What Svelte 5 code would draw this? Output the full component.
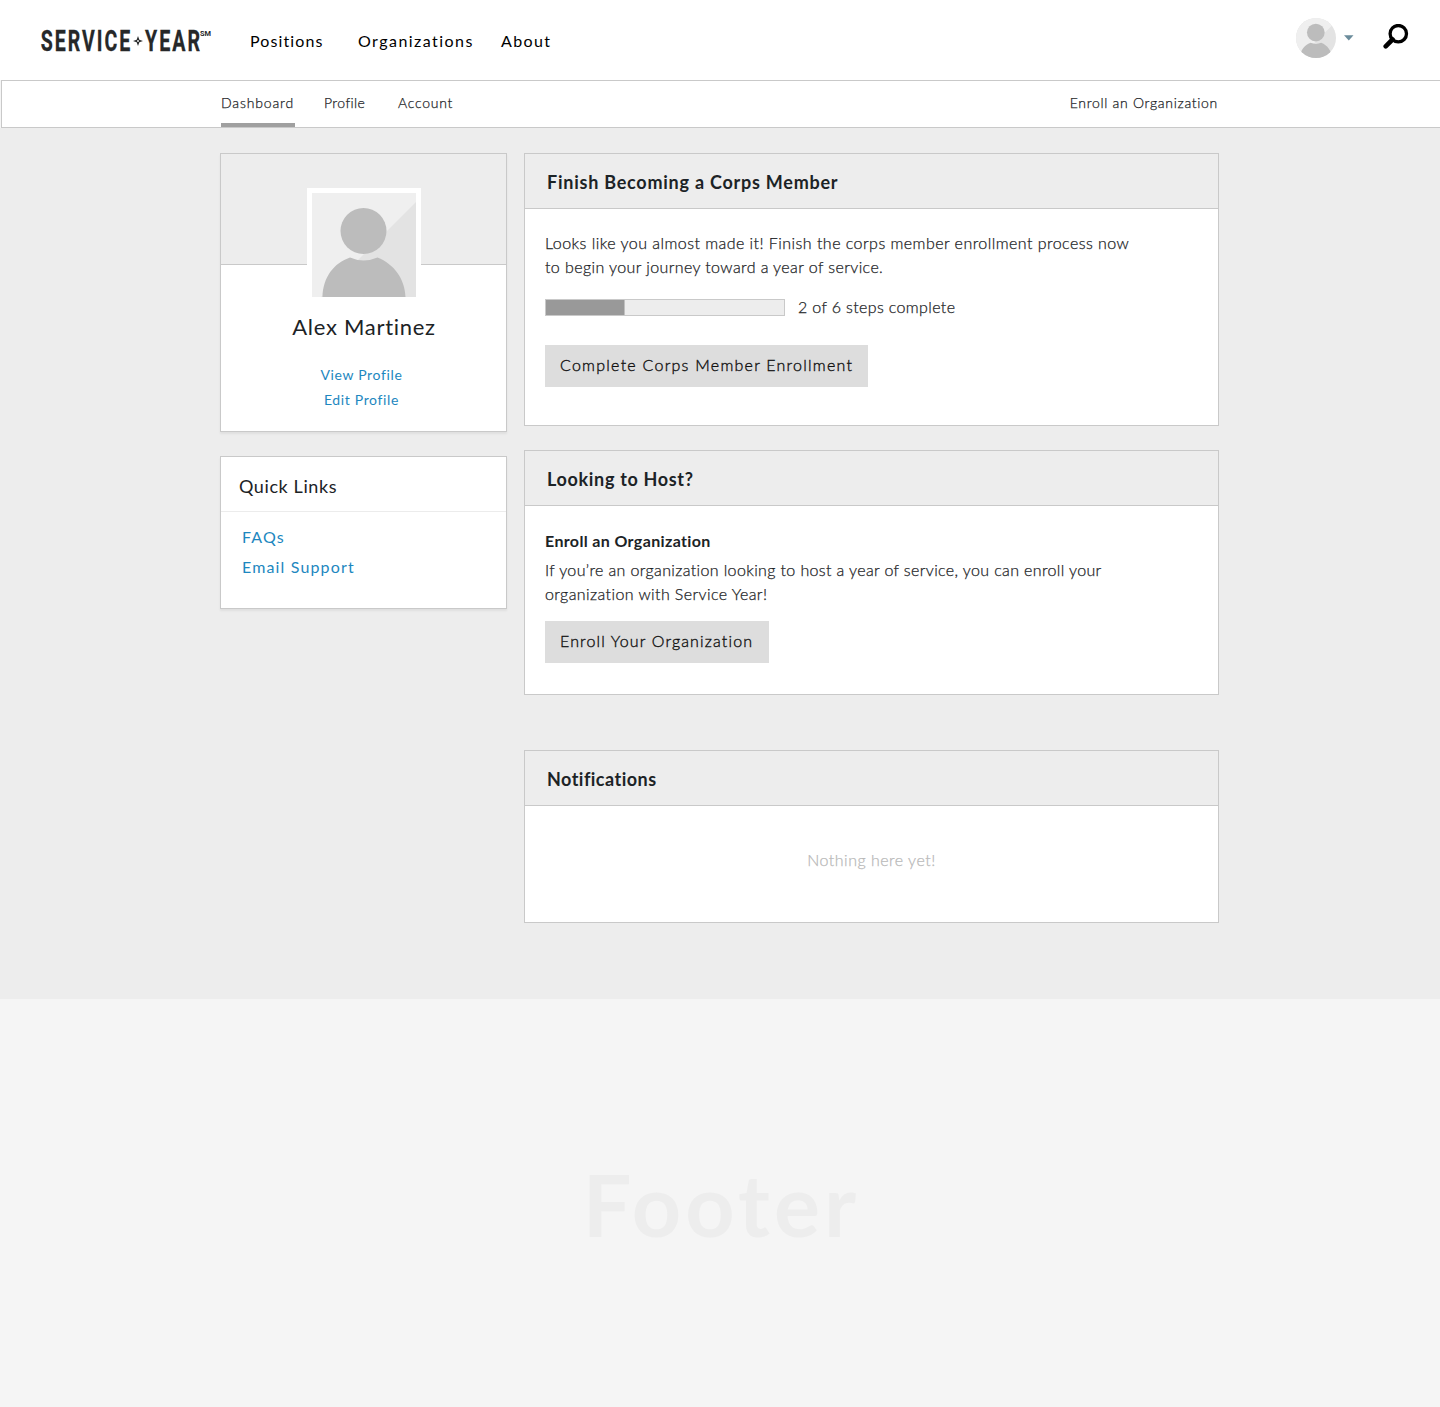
<script>
  const mainNav = [
    { label: 'Positions', key: 'positions' },
    { label: 'Organizations', key: 'organizations' },
    { label: 'About', key: 'about' }
  ];
  const steps = { done: 2, total: 6 };
  const percent = (steps.done / steps.total) * 100;
</script>

{#snippet person()}
  <rect width="104" height="104" fill="#e3e3e3" />
  <path d="M0 0H104V9L9 104H0Z" fill="#efefef" />
  <circle cx="51.5" cy="38" r="23" fill="#bcbcbc" />
  <path d="M10.500 104C11 84 22 70 38 64.500Q51.500 70.500 65.500 64.500C82 71 93 86 93.500 104Z" fill="#bcbcbc" />
{/snippet}

<header class="top">
  <svg class="logo" width="180" height="50" viewBox="0 0 180 50" role="img" aria-label="Service Year">
    <text class="word" x="0.700" y="35" textLength="91.500" lengthAdjust="spacingAndGlyphs">SERVICE</text>
    <path d="M98 20L99.300 23.700L103 25L99.300 26.300L98 30L96.700 26.300L93 25L96.700 23.700Z" fill="#262829" />
    <circle cx="98" cy="25" r="0.9" fill="#fff" />
    <text class="word" x="105" y="35" textLength="57" lengthAdjust="spacingAndGlyphs">YEAR</text>
    <text class="mark" x="160" y="20" textLength="11" lengthAdjust="spacingAndGlyphs">SM</text>
  </svg>
  <nav class="main-nav">
    {#each mainNav as item}
      <span class="nav-item {item.key}">{item.label}</span>
    {/each}
  </nav>
  <div class="tools">
    <svg class="avatar" width="40" height="40" viewBox="0 0 104 104">{@render person()}</svg>
    <svg class="caret" width="10" height="6" viewBox="0 0 10 6"><path d="M0 0.200H9.500L4.800 5.400Z" fill="#6b8c9b" /></svg>
    <svg class="search" width="26" height="26" viewBox="0 0 26 26">
      <circle cx="15.300" cy="9.700" r="8.200" fill="none" stroke="#000" stroke-width="3.300" />
      <path d="M9.500 15.500L2.700 22.300" stroke="#000" stroke-width="4.600" stroke-linecap="round" />
    </svg>
  </div>
</header>

<div class="subnav">
  <div class="subnav-inner">
    <span class="tab active dashboard">Dashboard</span>
    <span class="tab profile">Profile</span>
    <span class="tab account">Account</span>
    <span class="tab enroll">Enroll an Organization</span>
  </div>
</div>

<main>
  <aside>
    <section class="card user">
      <div class="cover"></div>
      <svg class="photo" width="104" height="104" viewBox="0 0 104 104">{@render person()}</svg>
      <h1>Alex Martinez</h1>
      <div class="user-links">
        <span class="view">View Profile</span>
        <span class="edit">Edit Profile</span>
      </div>
    </section>
    <section class="card quick">
      <h2>Quick Links</h2>
      <div class="quick-links">
        <span class="faqs">FAQs</span>
        <span class="email">Email Support</span>
      </div>
    </section>
  </aside>

  <div class="content">
    <section class="panel finish">
      <h2>Finish Becoming a Corps Member</h2>
      <div class="body">
        <p><span class="line l1">Looks like you almost made it! Finish the corps member enrollment process now</span><span class="line l2">to begin your journey toward a year of service.</span></p>
        <div class="progress">
          <div class="bar"><div class="fill" style="width: {percent}%"></div></div>
          <span class="count">{steps.done} of {steps.total} steps complete</span>
        </div>
        <button class="b1">Complete Corps Member Enrollment</button>
      </div>
    </section>

    <section class="panel host">
      <h2>Looking to Host?</h2>
      <div class="body">
        <h3>Enroll an Organization</h3>
        <p><span class="line l3">If you’re an organization looking to host a year of service, you can enroll your</span><span class="line l4">organization with Service Year!</span></p>
        <button class="b2">Enroll Your Organization</button>
      </div>
    </section>

    <section class="panel notes">
      <h2>Notifications</h2>
      <div class="body"><p class="empty">Nothing here yet!</p></div>
    </section>
  </div>
</main>

<footer><span>Footer</span></footer>

<style>
  :global(body) {
    margin: 0;
    background: #f5f5f5;
    font-family: Lato, 'Open Sans', sans-serif;
    color: #1c2326;
  }
  * { box-sizing: border-box; }
  h1, h2, h3, p { margin: 0; }
  svg { display: block; }
  span { white-space: nowrap; }

  .top {
    height: 80px;
    background: #fff;
    display: flex;
    align-items: flex-start;
    padding-left: 40px;
  }
  .logo { margin-top: 16px; flex: none; overflow: visible; }
  .word { font: 700 29.500px Roboto, sans-serif; letter-spacing: 3px; fill: #262829; stroke: #262829; stroke-width: 0.3px; }
  .mark { font: 700 8px Roboto, sans-serif; fill: #262829; }
  .main-nav {
    display: flex;
    margin: 29px 0 0 30px;
    font-size: 16px;
    line-height: 24px;
    color: #000;
  }
  .positions { width: 108px; letter-spacing: 1.12px; }
  .organizations { width: 143px; letter-spacing: 1.46px; }
  .about { letter-spacing: 1.4px; }
  .tools { margin-left: auto; display: flex; padding-right: 31px; }
  .avatar { margin-top: 18px; border-radius: 50%; }
  .caret { margin: 35px 0 0 8px; }
  .search { margin: 24px 0 0 29px; }

  .subnav {
    height: 48px;
    margin-left: 1px;
    background: #fff;
    border: 1px solid #c9c9c9;
    border-right: 0;
  }
  .subnav-inner {
    width: 998px;
    height: 46px;
    margin-left: 219px;
    display: flex;
    font-size: 14px;
    font-weight: 300;
    line-height: 44px;
    color: #1c2326;
    -webkit-text-stroke: 0.25px #1c2326;
  }
  .active { width: 74px; border-bottom: 4px solid #a0a0a0; letter-spacing: 0.85px; }
  .profile { margin-left: 29px; width: 74px; letter-spacing: 0.4px; }
  .account { letter-spacing: 0.75px; }
  .enroll { margin: 0 1px 0 auto; letter-spacing: 0.7px; }

  main {
    height: 871px;
    background: #ededed;
    padding: 25px 221px 0 220px;
    display: flex;
    gap: 17px;
  }
  aside { width: 287px; flex: none; }
  .card {
    background: #fff;
    border: 1px solid #c9c9c9;
    box-shadow: 0 2px 2px rgba(0, 0, 0, 0.06);
  }
  .user { height: 279px; text-align: center; }
  .cover { height: 111px; background: #ededed; border-bottom: 1px solid #c9c9c9; }
  .photo {
    position: relative;
    box-sizing: content-box;
    border: 5px solid #fff;
    margin: -77px auto 0;
  }
  h1 { font-size: 22px; font-weight: 400; line-height: 30px; margin-top: 10px; padding-left: 1px; letter-spacing: 0.72px; }
  .user-links {
    display: flex;
    flex-direction: column;
    align-items: center;
    margin: 20px 4px 0 0;
    font-size: 14px;
    line-height: 25px;
    letter-spacing: 0.65px;
    color: #1d87c0;
  }
  .quick { height: 153px; margin-top: 24px; }
  .quick h2 {
    height: 55px;
    padding-left: 18px;
    border-bottom: 1px solid #ececec;
    font-size: 18px;
    font-weight: 400;
    line-height: 59px;
    letter-spacing: 0.6px;
  }
  .quick-links {
    display: flex;
    flex-direction: column;
    padding: 10px 0 0 21px;
    font-size: 16px;
    line-height: 30px;
    letter-spacing: 1.15px;
    color: #1d87c0;
  }

  .content { flex: 1; }
  .panel { background: #fff; border: 1px solid #c9c9c9; }
  .panel h2 {
    height: 55px;
    padding-left: 22px;
    background: #ededed;
    border-bottom: 1px solid #c9c9c9;
    font-size: 18px;
    font-weight: 700;
    line-height: 57px;
    letter-spacing: 0.76px;
  }
  .panel.host h2 { letter-spacing: 0.67px; }
  .panel.notes h2 { letter-spacing: 0.47px; }
  .finish { height: 273px; }
  .host { height: 245px; margin-top: 24px; }
  .notes { height: 173px; margin-top: 55px; }
  .body { padding: 22px 20px 0; font-size: 16px; line-height: 24px; }
  .line { display: block; }
  .l1 { letter-spacing: 0.46px; }
  .l2 { letter-spacing: 0.4px; }
  .count { letter-spacing: 0.36px; }
  .l3 { letter-spacing: 0.37px; }
  .l4 { letter-spacing: 0.41px; }
  p, .count { color: #1c2326; font-weight: 300; -webkit-text-stroke: 0.25px currentColor; }
  .progress { display: flex; align-items: center; gap: 13px; margin-top: 16px; }
  .bar { width: 240px; height: 17px; background: #ededed; border: 1px solid #c9c9c9; }
  .fill { height: 15px; background: #999; border-right: 1px solid #c0c0c0; }
  button {
    display: block;
    height: 42px;
    padding: 0 0 2px 15px;
    border: 0;
    background: #ddd;
    color: #111;
    font: 300 16px/40px Lato, sans-serif;
    -webkit-text-stroke: 0.35px #111;
    text-align: left;
    white-space: nowrap;
  }
  .b1 { width: 323px; margin-top: 26px; letter-spacing: 1.25px; }
  .b2 { width: 224px; margin-top: 15px; letter-spacing: 1.15px; }
  h3 { font-size: 16px; line-height: 24px; font-weight: 700; letter-spacing: 0.36px; }
  .host .body { padding-top: 23px; }
  .host p { margin-top: 5px; }
  .body .empty { color: #b8b8b8; text-align: center; margin-top: 20px; letter-spacing: 0.5px; }

  footer {
    height: 408px;
    background: #f5f5f5;
    display: flex;
    justify-content: center;
    padding-left: 3px;
    color: #ededed;
    font-size: 86px;
    font-weight: 700;
    line-height: 410px;
    letter-spacing: 4.200px;
  }
</style>
